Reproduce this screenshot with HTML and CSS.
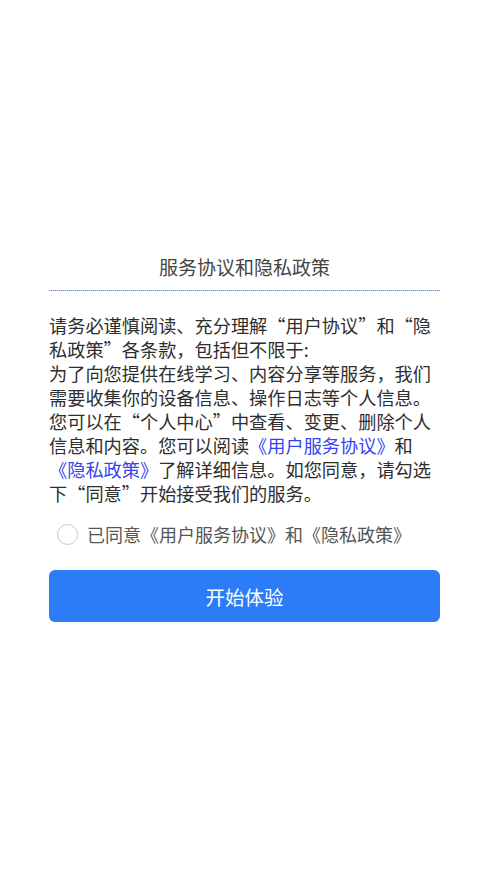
FILE: index.html
```html
<!DOCTYPE html>
<html lang="zh-CN">
<head>
<meta charset="utf-8">
<title>服务协议和隐私政策</title>
<link rel="stylesheet" href="styles.css">
</head>
<body>
<div class="page">
  <h1 class="title">服务协议和隐私政策</h1>
  <div class="rule"></div>
  <p class="content">请务必谨慎阅读、充分理解“用户协议”和“隐私政策”各条款，包括但不限于:<br>为了向您提供在线学习、内容分享等服务，我们需要收集你的设备信息、操作日志等个人信息。您可以在“个人中心”中查看、变更、删除个人信息和内容。您可以阅读<a class="link">《用户服务协议》</a>和<a class="link">《隐私政策》</a>了解详细信息。如您同意，请勾选下“同意”开始接受我们的服务。</p>
  <label class="agree">
    <span class="circle"></span>
    <span class="agree-text">已同意《用户服务协议》和《隐私政策》</span>
  </label>
  <button class="start">开始体验</button>
</div>
</body>
</html>
```
FILE: styles.css
```css
html, body {
  margin: 0;
  padding: 0;
  background: #ffffff;
}
body {
  font-family: "Noto Sans CJK SC", "Noto Sans", sans-serif;
}
.page {
  padding: 253px 49px 0;
  display: flex;
  flex-direction: column;
}
.title {
  margin: 0;
  padding-bottom: 9px;
  font-size: 19px;
  line-height: 28px;
  font-weight: normal;
  color: #444444;
  text-align: center;
}
.rule {
  height: 1px;
  background-image: repeating-linear-gradient(to right, #5d89ea 0, #5d89ea 1px, #c9d8f7 1px, #c9d8f7 2px);
}
.content {
  margin: 22px 0 0;
  font-size: 18.2px;
  line-height: 24px;
  color: #2e2e2e;
}
.link {
  color: #3344f0;
}
.agree {
  margin-top: 14px;
  height: 30px;
  display: flex;
  align-items: center;
  gap: 9px;
  padding-left: 8px;
}
.circle {
  width: 19px;
  height: 19px;
  border: 1.5px solid #c8c8c8;
  border-radius: 50%;
  flex: none;
}
.agree-text {
  font-size: 18px;
  color: #555555;
}
.start {
  margin-top: 21px;
  height: 52px;
  border: none;
  border-radius: 6px;
  background: #2d7cf7;
  color: #ffffff;
  font-family: "Noto Sans CJK SC", "Noto Sans", sans-serif;
  font-size: 19.5px;
  padding: 0;
}
```
